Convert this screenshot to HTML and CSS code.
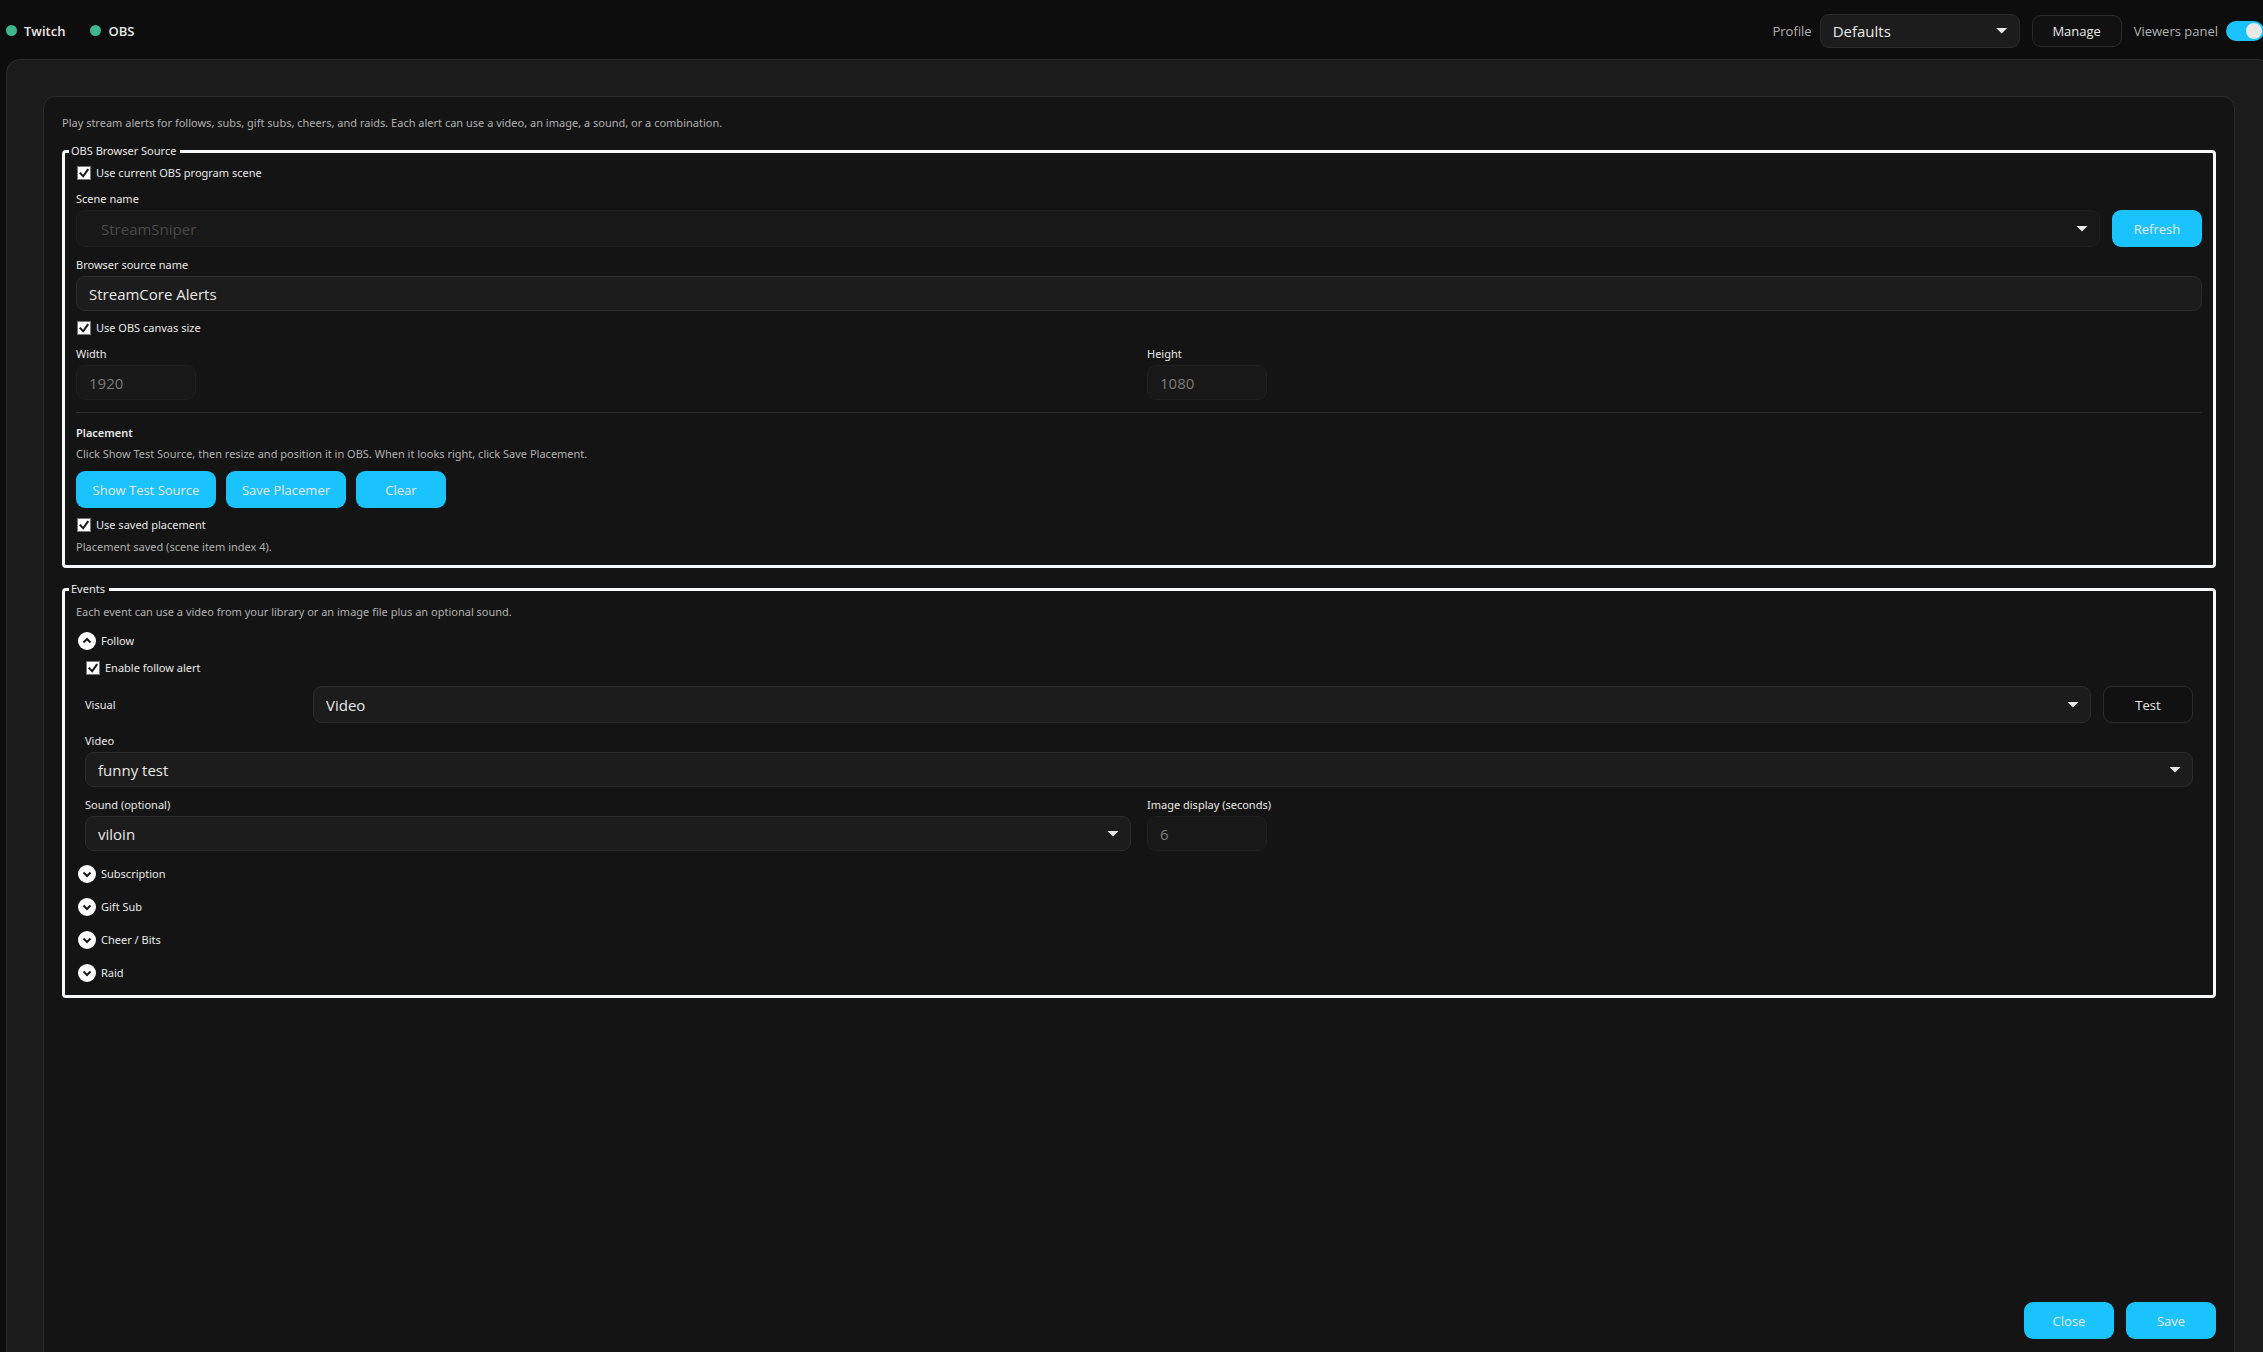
FILE: index.html
```html
<!DOCTYPE html>
<html lang="en">
<head>
    <meta charset="UTF-8">
    <meta name="viewport" content="width=device-width, initial-scale=1.0">
    <title>Stream Alerts</title>
    <link rel="stylesheet" href="styles.css">
</head>
<body>
    <div class="app">
        <header class="topbar">
            <div class="status-list">
                <span class="status"><span class="dot"></span>Twitch</span>
                <span class="status"><span class="dot"></span>OBS</span>
            </div>
            <div class="topbar-actions">
                <label class="topbar-label" for="profile">Profile</label>
                <div class="select-wrap profile-select">
                    <select id="profile"><option>Defaults</option></select>
                </div>
                <button type="button" class="btn btn-small">Manage</button>
                <label class="topbar-label" for="viewers">Viewers panel</label>
                <input type="checkbox" class="toggle" id="viewers" checked>
            </div>
        </header>

        <main class="outer-panel">
            <form class="panel">
                <p class="hint">Play stream alerts for follows, subs, gift subs, cheers, and raids. Each alert can use a video, an image, a sound, or a combination.</p>

                <fieldset class="group">
                    <legend>OBS Browser Source</legend>
                    <div class="group-body">
                        <label class="check"><input type="checkbox" checked>Use current OBS program scene</label>

                        <div class="field">
                            <label for="scene">Scene name</label>
                            <div class="row">
                                <div class="select-wrap grow">
                                    <select id="scene" class="tall indented" disabled><option>StreamSniper</option></select>
                                </div>
                                <button type="button" class="btn btn-primary">Refresh</button>
                            </div>
                        </div>

                        <div class="field">
                            <label for="source">Browser source name</label>
                            <input type="text" id="source" value="StreamCore Alerts">
                        </div>

                        <label class="check"><input type="checkbox" checked>Use OBS canvas size</label>

                        <div class="columns">
                            <div class="field">
                                <label for="width">Width</label>
                                <input type="text" id="width" class="short" value="1920" disabled>
                            </div>
                            <div class="field">
                                <label for="height">Height</label>
                                <input type="text" id="height" class="short" value="1080" disabled>
                            </div>
                        </div>

                        <hr>

                        <div class="placement">
                            <h2>Placement</h2>
                            <p class="hint">Click Show Test Source, then resize and position it in OBS. When it looks right, click Save Placement.</p>
                            <div class="placement-buttons">
                                <button type="button" class="btn btn-primary btn-wide">Show Test Source</button>
                                <button type="button" class="btn btn-primary btn-medium">Save Placemer</button>
                                <button type="button" class="btn btn-primary">Clear</button>
                            </div>
                        </div>

                        <div class="saved">
                            <label class="check"><input type="checkbox" checked>Use saved placement</label>
                            <p class="hint">Placement saved (scene item index 4).</p>
                        </div>
                    </div>
                </fieldset>

                <fieldset class="group">
                    <legend>Events</legend>
                    <div class="events-body">
                        <p class="hint">Each event can use a video from your library or an image file plus an optional sound.</p>

                        <div class="event-list">
                            <details open>
                                <summary>
                                    <svg class="chevron" viewBox="0 0 18 18"><circle cx="9" cy="9" r="9"/><path d="M5.5 7.5L9 11l3.5-3.5"/></svg>
                                    Follow
                                </summary>
                                <div class="event">
                                    <label class="check"><input type="checkbox" checked>Enable follow alert</label>
                                    <div class="row">
                                        <label class="row-label" for="visual">Visual</label>
                                        <div class="select-wrap grow">
                                            <select id="visual" class="tall"><option>Video</option></select>
                                        </div>
                                        <button type="button" class="btn">Test</button>
                                    </div>
                                    <div class="field">
                                        <label for="video">Video</label>
                                        <div class="select-wrap">
                                            <select id="video"><option>funny test</option></select>
                                        </div>
                                    </div>
                                    <div class="columns">
                                        <div class="field">
                                            <label for="sound">Sound (optional)</label>
                                            <div class="select-wrap">
                                                <select id="sound"><option>viloin</option></select>
                                            </div>
                                        </div>
                                        <div class="field">
                                            <label for="seconds">Image display (seconds)</label>
                                            <input type="text" id="seconds" class="short" value="6" disabled>
                                        </div>
                                    </div>
                                </div>
                            </details>
                            <details>
                                <summary>
                                    <svg class="chevron" viewBox="0 0 18 18"><circle cx="9" cy="9" r="9"/><path d="M5.5 7.5L9 11l3.5-3.5"/></svg>
                                    Subscription
                                </summary>
                            </details>
                            <details>
                                <summary>
                                    <svg class="chevron" viewBox="0 0 18 18"><circle cx="9" cy="9" r="9"/><path d="M5.5 7.5L9 11l3.5-3.5"/></svg>
                                    Gift Sub
                                </summary>
                            </details>
                            <details>
                                <summary>
                                    <svg class="chevron" viewBox="0 0 18 18"><circle cx="9" cy="9" r="9"/><path d="M5.5 7.5L9 11l3.5-3.5"/></svg>
                                    Cheer / Bits
                                </summary>
                            </details>
                            <details>
                                <summary>
                                    <svg class="chevron" viewBox="0 0 18 18"><circle cx="9" cy="9" r="9"/><path d="M5.5 7.5L9 11l3.5-3.5"/></svg>
                                    Raid
                                </summary>
                            </details>
                        </div>
                    </div>
                </fieldset>

                <div class="footer">
                    <button type="button" class="btn btn-primary">Close</button>
                    <button type="submit" class="btn btn-primary">Save</button>
                </div>
            </form>
        </main>
    </div>
</body>
</html>
```
FILE: styles.css
```css
/* Base styles */
* {
    margin: 0;
    padding: 0;
    box-sizing: border-box;
}

body {
    background: #0d0d0d;
    color: #e8e8e8;
    font-family: 'Noto Sans', 'Open Sans', sans-serif;
    font-size: 11px;
    line-height: 16px;
}

input,
select,
button {
    font-family: 'Open Sans', 'Noto Sans', sans-serif;
    color: inherit;
}

.app {
    display: flex;
    flex-direction: column;
    min-height: 100vh;
    overflow: hidden;
}

/* Top bar */
.topbar {
    display: flex;
    justify-content: space-between;
    align-items: center;
    height: 59px;
    padding: 2px 0 0 6px;
    font-family: 'Open Sans', 'Noto Sans', sans-serif;
}

.status-list {
    display: flex;
    gap: 25px;
}

.status {
    display: flex;
    align-items: center;
    gap: 7px;
    font-size: 13px;
    font-weight: 600;
}

.dot {
    width: 11px;
    height: 11px;
    border-radius: 50%;
    background: #3fb68b;
}

.topbar-actions {
    display: flex;
    align-items: center;
    margin-right: -1px;
}

.topbar-label {
    font-size: 13px;
    color: #b0b0b0;
    margin-right: 8px;
}

.profile-select {
    width: 200px;
    margin-right: 12px;
}

.profile-select select {
    height: 34px;
}

.toggle {
    appearance: none;
    display: flex;
    align-items: center;
    justify-content: flex-end;
    width: 38px;
    height: 20px;
    padding: 0 2px;
    border-radius: 10px;
    background: #1ac3fb;
}

.toggle::before {
    content: '';
    width: 16px;
    height: 16px;
    border-radius: 50%;
    background: #e8e8e8;
}

/* Panels run past the right and bottom edge of the window */
.outer-panel {
    flex: 1;
    display: flex;
    margin: 0 -9px -47px 6px;
    padding: 36px;
    background: #1b1b1b;
    border: 1px solid #2c2c2c;
    border-radius: 14px;
}

.panel {
    flex: 1;
    display: flex;
    flex-direction: column;
    padding: 18px 18px 22px;
    background: #141414;
    border: 1px solid #2c2c2c;
    border-radius: 12px;
}

.hint {
    color: #b0b0b0;
}

/* Groups */
.group {
    margin-top: 12px;
    padding: 0 4px;
    border: 3px solid #f6f8f9;
    border-radius: 4px;
}

.group + .group {
    margin-top: 13px;
}

legend {
    padding: 0 4px 1px 2px;
}

.group-body {
    display: flex;
    flex-direction: column;
    gap: 10px;
    padding: 6px 7px 10px;
}

.events-body {
    padding: 6px 7px;
}

hr {
    height: 1px;
    margin: 2px 0;
    border: none;
    background: #2c2c2c;
}

h2 {
    font-size: 11px;
    font-weight: 600;
}

.field {
    display: flex;
    flex-direction: column;
    gap: 3px;
}

.row {
    display: flex;
    align-items: center;
    gap: 12px;
}

.row-label {
    width: 216px;
}

.grow {
    flex: 1;
}

.columns {
    display: grid;
    grid-template-columns: 1fr 1fr;
    gap: 16px;
}

/* Controls */
input[type="text"],
select {
    appearance: none;
    display: block;
    width: 100%;
    height: 35px;
    padding: 0 12px;
    background: #1c1c1c;
    border: 1px solid #2c2c2c;
    border-radius: 9px;
    font-size: 15px;
}

input[type="text"]:disabled,
select:disabled {
    background: #181818;
    border-color: #1f1f1f;
    color: #7c7c7c;
    opacity: 1;
}

select.tall {
    height: 37px;
}

select.indented:disabled {
    padding-left: 24px;
    color: #484848;
}

input.short {
    width: 120px;
}

.select-wrap {
    position: relative;
}

.select-wrap::after {
    content: '';
    position: absolute;
    right: 12px;
    top: calc(50% - 3px);
    width: 12px;
    height: 6px;
    background: #e8e8e8;
    clip-path: polygon(0 0, 100% 0, 50% 100%);
    pointer-events: none;
}

.check {
    display: flex;
    align-items: center;
    gap: 5px;
    height: 14px;
    margin-bottom: 1px;
    padding-left: 1px;
}

.check input {
    appearance: none;
    width: 14px;
    height: 14px;
    background: #ffffff;
    border: 1px solid #767676;
}

.check input:checked::before {
    content: '';
    display: block;
    width: 12px;
    height: 12px;
    background: #1a1a1a;
    clip-path: polygon(8% 52%, 22% 42%, 42% 64%, 78% 12%, 92% 22%, 44% 90%);
}

.btn {
    width: 90px;
    height: 37px;
    background: #111111;
    border: 1px solid #2c2c2c;
    border-radius: 9px;
    font-size: 13px;
    white-space: nowrap;
}

.btn-small {
    height: 32px;
    margin-right: 12px;
}

.btn-primary {
    background: #1ac3fb;
    border: none;
}

.btn-medium {
    width: 120px;
}

.btn-wide {
    width: 140px;
}

.placement .hint {
    margin: 5px 0 9px;
}

.placement-buttons {
    display: flex;
    gap: 10px;
}

.saved .hint {
    margin-top: 7px;
}

/* Events */
.event-list {
    padding-top: 4px;
}

summary {
    display: flex;
    align-items: center;
    gap: 5px;
    height: 33px;
    padding-left: 2px;
    list-style: none;
    cursor: pointer;
}

.chevron {
    width: 18px;
    height: 18px;
}

.chevron circle {
    fill: #ffffff;
}

.chevron path {
    fill: none;
    stroke: #1a1a1a;
    stroke-width: 2;
}

details[open] .chevron {
    transform: rotate(180deg);
}

.event {
    display: flex;
    flex-direction: column;
    gap: 10px;
    padding: 4px 9px 6px;
}

.footer {
    display: flex;
    justify-content: flex-end;
    gap: 12px;
    margin-top: auto;
}
```
